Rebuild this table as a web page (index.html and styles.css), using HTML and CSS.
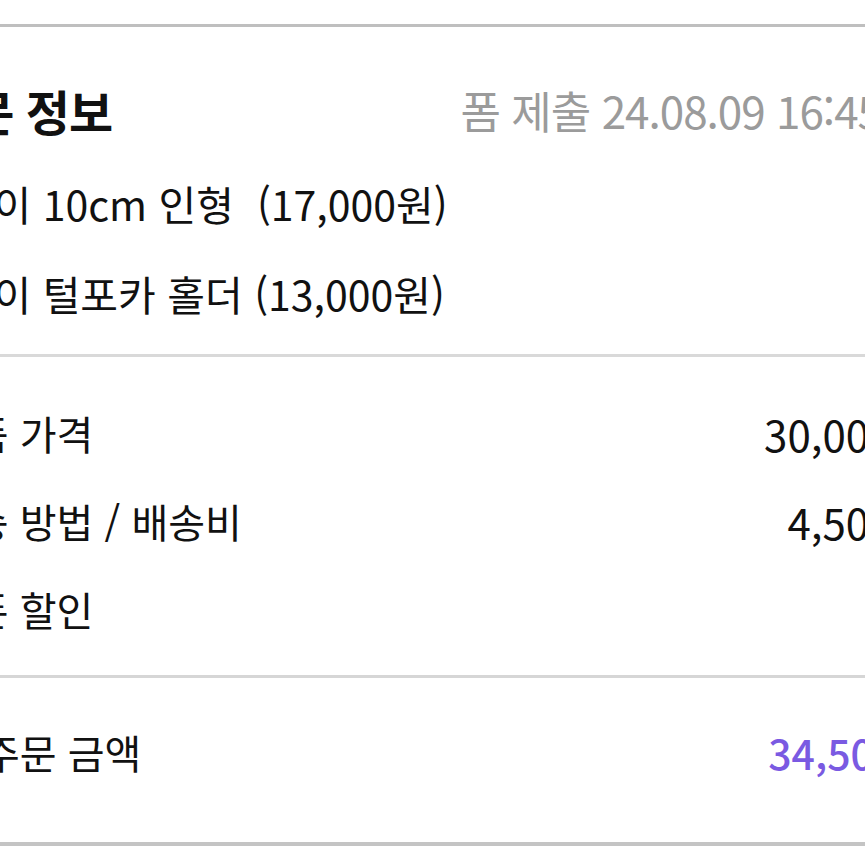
FILE: index.html
```html
<!DOCTYPE html>
<html lang="ko">
<head>
<meta charset="utf-8">
<link rel="stylesheet" href="styles.css">
</head>
<body>
<div class="frame">
  <div class="card">
    <section class="sec sec-info">
      <div class="head-row">
        <h2 class="title">주문 정보</h2>
        <span class="date">폼 제출 24.08.09 16:45</span>
      </div>
      <ul class="items">
        <li class="item">마럼이 10cm 인형&nbsp; (17,000원)</li>
        <li class="item">마럼이 털포카 홀더 (13,000원)</li>
      </ul>
    </section>
    <section class="sec sec-price">
      <div class="row"><span class="label">상품 가격</span><span class="value">30,000원</span></div>
      <div class="row"><span class="label">배송 방법 / 배송비</span><span class="value">4,500원</span></div>
      <div class="row"><span class="label">쿠폰 할인</span><span class="value"></span></div>
    </section>
    <section class="sec sec-total">
      <div class="row"><span class="label">총 주문 금액</span><span class="value total">34,500원</span></div>
    </section>
  </div>
</div>
</body>
</html>
```

FILE: styles.css
```css
html, body {
  margin: 0;
  padding: 0;
  background: #ffffff;
}
body {
  font-family: "Noto Sans CJK KR", "Noto Sans", sans-serif;
  color: #111111;
  overflow: hidden;
}
.frame {
  width: 865px;
  height: 865px;
  overflow: hidden;
  padding-top: 24px;
  box-sizing: border-box;
}
.card {
  margin-left: -65px;
  width: 990px;
  border-top: 3px solid #bfbfbf;
  border-bottom: 4px solid #c4c4c4;
}
.sec-info {
  padding: 38px 0 16px;
  border-bottom: 3px solid #d9d9d9;
}
.head-row {
  height: 90px;
  display: flex;
  align-items: center;
  justify-content: space-between;
}
.title {
  margin: 0 0 0 -8px;
  font-size: 48px;
  font-weight: 700;
  letter-spacing: -1px;
}
.date {
  padding-right: 44px;
  font-size: 44px;
  color: #9b9b9b;
  font-weight: 400;
  letter-spacing: -1px;
}
.items {
  list-style: none;
  margin: 3px 0 0 -17px;
  padding: 0;
}
.item {
  height: 90px;
  display: flex;
  align-items: center;
  font-size: 41px;
  white-space: pre;
}
.sec-price {
  padding: 32px 0 22px;
  border-bottom: 3px solid #d6d6d6;
}
.row {
  height: 88px;
  display: flex;
  align-items: center;
  justify-content: space-between;
  font-size: 40px;
}
.value {
  font-size: 42px;
  margin-right: -6px;
}
.sec-total {
  padding: 30px 0 46px;
}
.total {
  color: #7a5ae2;
  font-weight: 500;
  font-size: 41px;
  margin-right: -10px;
}
```
